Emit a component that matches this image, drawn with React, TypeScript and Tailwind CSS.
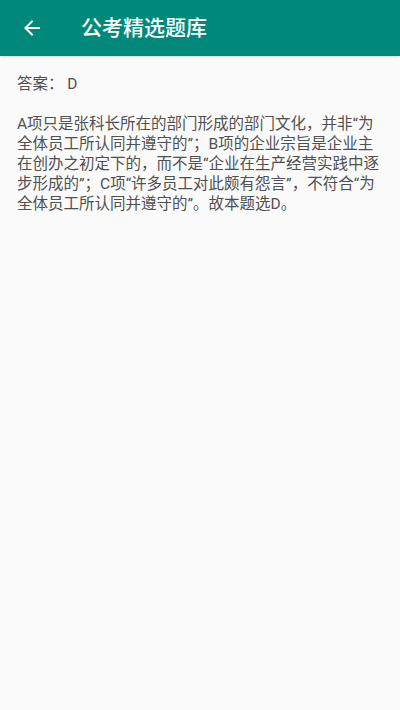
export default function App() {
  const font = { fontFamily: 'Roboto, "Noto Sans CJK SC", sans-serif' };

  return (
    <div className="w-[400px] h-[710px] bg-[#fafafa] flex flex-col" style={font}>
      {/* HEADER */}
      <div className="h-[56px] bg-[#00897b] flex items-center shrink-0 shadow-sm">
        <div className="w-[24px] h-[24px] ml-[20px]">
          <svg viewBox="0 0 24 24" className="w-[24px] h-[24px] fill-white">
            <path d="M20 11H7.83l5.59-5.59L12 4l-8 8 8 8 1.41-1.41L7.83 13H20v-2z" />
          </svg>
        </div>
        <h1 className="ml-[37px] text-[21px] font-medium text-white leading-none">公考精选题库</h1>
      </div>

      {/* CONTENT */}
      <div className="px-[17px] pt-[18px] text-[#505050] text-[15.5px]">
        <p className="leading-[20px]">答案： D</p>
        <p className="mt-[20px] leading-[20px]">
          A项只是张科长所在的部门形成的部门文化，并非“为全体员工所认同并遵守的”；B项的企业宗旨是企业主在创办之初定下的，而不是“企业在生产经营实践中逐步形成的”；C项“许多员工对此颇有怨言”，不符合“为全体员工所认同并遵守的”。故本题选D。
        </p>
      </div>
    </div>
  );
}
